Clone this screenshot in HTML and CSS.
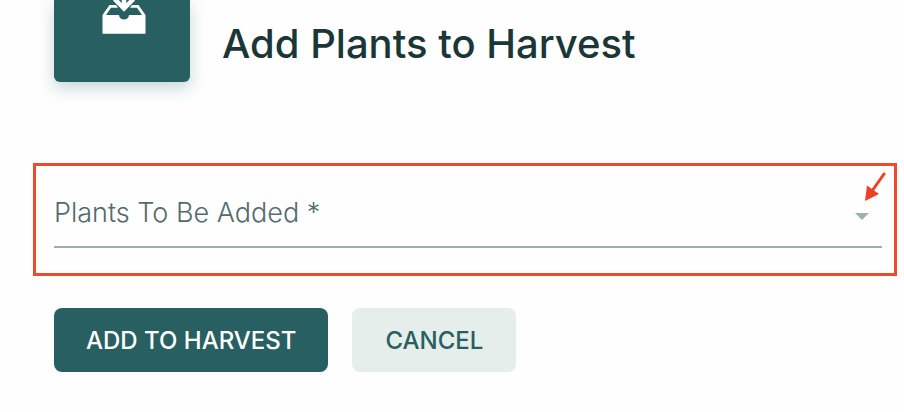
FILE: index.html
```html
<!DOCTYPE html>
<html lang="en">
<head>
    <meta charset="UTF-8">
    <meta name="viewport" content="width=device-width, initial-scale=1.0">
    <title>Add Plants to Harvest</title>
    <link rel="stylesheet" href="styles.css">
</head>
<body>
    <main class="page">
        <header class="page-header">
            <div class="tile">
                <svg class="tile-icon" viewBox="0 0 44 34" aria-hidden="true">
                    <path class="tray" d="M0.500 15L7.500 5H14l2 2.700H9L4 15h13a5 4.500 0 0 0 10 0h13l-5-7.300h-7L30 5h6.500l7 10v18.700h-43z"/>
                    <path class="arrow" d="M22 0v8M12.500 -1l9.500 9.500l9.500 -9.500"/>
                </svg>
            </div>
            <h1>Add Plants to Harvest</h1>
        </header>
        <form>
            <div class="highlight">
                <div class="field">
                    <label for="plants">Plants To Be Added *</label>
                    <select id="plants" name="plants" required>
                        <option value=""></option>
                    </select>
                    <svg class="caret" viewBox="0 0 14 7" aria-hidden="true">
                        <path d="M0 0h14L7 7z"/>
                    </svg>
                </div>
                <svg class="pointer" viewBox="0 0 22 30" aria-hidden="true">
                    <path class="pointer-line" d="M20 2L8 19"/>
                    <path class="pointer-head" d="M1 29L3 13.500l12 8.500z"/>
                </svg>
            </div>
            <div class="actions">
                <button type="submit" class="primary">Add to Harvest</button>
                <button type="button" class="secondary">Cancel</button>
            </div>
        </form>
    </main>
</body>
</html>
```
FILE: styles.css
```css
* {
    box-sizing: border-box;
}

body {
    font-family: Inter, "Liberation Sans", sans-serif;
    margin: 0;
    background-color: #fefefe;
    color: #1b3636;
}

.page {
    padding: 0 22px 40px 54px;
}

.page-header {
    display: flex;
    align-items: flex-start;
    gap: 32px;
}

.tile {
    width: 136px;
    height: 82px;
    background-color: #285f60;
    border-radius: 0 0 6px 6px;
    box-shadow: 0 6px 16px rgba(40, 95, 96, 0.25);
}

.tile-icon {
    display: block;
    width: 44px;
    height: 34px;
    margin-left: 48px;
}

.tray {
    fill: white;
}

.arrow {
    fill: none;
    stroke: white;
    stroke-width: 4.5;
}

h1 {
    margin: 20px 0 0;
    font-size: 40px;
    line-height: 48px;
    font-weight: 500;
}

.highlight {
    position: relative;
    margin: 81px -15px 0 -21px;
    padding: 17px 12px 25px 18px;
    border: 3px solid #ee4b2e;
}

.field {
    display: grid;
    align-items: center;
    height: 65px;
    border-bottom: 2px solid #9fadad;
}

.field > * {
    grid-area: 1 / 1;
}

label {
    margin-bottom: 4px;
    font-size: 27px;
    line-height: 32px;
    font-weight: 300;
    color: #536b6b;
    pointer-events: none;
}

select {
    width: 100%;
    height: 100%;
    border: none;
    outline: none;
    appearance: none;
    background: transparent;
    font: inherit;
    font-size: 27px;
}

.caret {
    justify-self: end;
    width: 14px;
    height: 7px;
    margin: 4px 13px 0 0;
    fill: #9fb0b0;
    pointer-events: none;
}

.pointer {
    position: absolute;
    top: 6px;
    right: 8px;
    width: 22px;
    height: 30px;
}

.pointer-line {
    stroke: #ee4024;
    stroke-width: 3;
    stroke-linecap: round;
}

.pointer-head {
    fill: #ee4024;
}

.actions {
    display: flex;
    gap: 24px;
    margin-top: 32px;
}

button {
    min-width: 164px;
    height: 64px;
    padding: 0 32px;
    border: none;
    border-radius: 8px;
    font-family: inherit;
    font-size: 24px;
    font-weight: 500;
    text-transform: uppercase;
    cursor: pointer;
}

.primary {
    background-color: #285f60;
    color: white;
}

.secondary {
    background-color: #e5eeeb;
    color: #285f60;
}
```
